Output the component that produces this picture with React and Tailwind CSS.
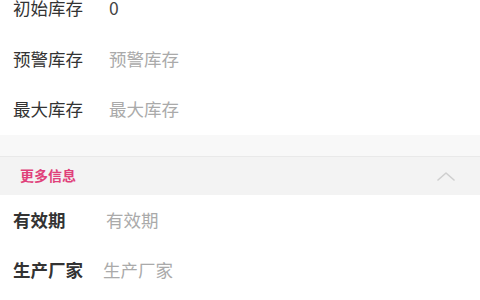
import React from "react";

const font = { fontFamily: '"Noto Sans CJK SC", "Noto Sans", sans-serif' };

function Row({ label, value, placeholder, labelW, bold }) {
  return (
    <div className="flex items-center h-[50.5px] pl-[13px]">
      <div
        className={`shrink-0 text-[17.5px] text-[#333] ${bold ? "font-bold" : "font-normal"}`}
        style={{ width: labelW }}
      >
        {label}
      </div>
      <div className={`text-[17.5px] ${value ? "text-[#444]" : "text-[#aaa]"}`}>
        {value || placeholder}
      </div>
    </div>
  );
}

export default function App() {
  return (
    <div className="w-[480px] h-[300px] overflow-hidden bg-white" style={font}>
      <div className="-mt-[17px]">
        {/* stock section */}
        <div className="bg-white">
          <Row label="初始库存" value="0" labelW={96} />
          <Row label="预警库存" placeholder="预警库存" labelW={96} />
          <Row label="最大库存" placeholder="最大库存" labelW={96} />
        </div>

        <div className="h-[21px] bg-[#f8f8f8]" />

        {/* more info header */}
        <div className="flex items-center justify-between h-[39px] bg-[#f3f3f3] border-t border-[#e9e9e9] pl-[20px] pr-[25px]">
          <span className="text-[14px] font-bold text-[#e0407a]">更多信息</span>
          <svg width="18" height="10" viewBox="0 0 18 10" fill="none">
            <path d="M1 9 L9 2 L17 9" stroke="#cfcfcf" strokeWidth="1.6" strokeLinecap="round" strokeLinejoin="round" />
          </svg>
        </div>

        <div className="bg-white">
          <Row label="有效期" placeholder="有效期" labelW={93} bold />
          <Row label="生产厂家" placeholder="生产厂家" labelW={90} bold />
        </div>
      </div>
    </div>
  );
}
